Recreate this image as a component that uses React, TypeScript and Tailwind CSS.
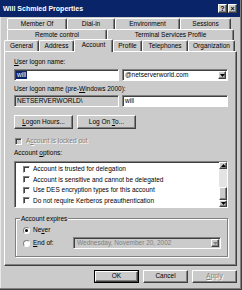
import React from 'react';

const sunken =
  'border border-t-[#808080] border-l-[#808080] border-b-white border-r-white shadow-[inset_1px_1px_0_#404040]';
const raised =
  'border border-t-white border-l-white border-b-[#404040] border-r-[#404040] shadow-[inset_-1px_-1px_0_#808080]';
const dimText = 'text-[#808080] [text-shadow:1px_1px_0_#ffffff]';

const Arrow = ({ up = false, dim = false }: { up?: boolean; dim?: boolean }) => (
  <svg width="5" height="3" viewBox="0 0 5 3">
    <path d={up ? 'M0 3h5L2.5 0z' : 'M0 0h5L2.5 3z'} fill={dim ? '#808080' : '#000'} />
  </svg>
);

const DropButton = ({ dim = false }: { dim?: boolean }) => (
  <div className={`w-[8px] h-[8px] shrink-0 bg-[#cbcbcb] flex items-center justify-center ${raised}`}>
    <Arrow dim={dim} />
  </div>
);

const Tab = ({ label, w }: { label: string; w: string }) => (
  <div
    className={`${w} h-[11px] flex items-center justify-center rounded-t-[2px] border-t border-l border-r border-t-white border-l-white border-r-[#404040] shadow-[inset_-1px_0_0_#808080]`}
  >
    {label}
  </div>
);

const CheckBox = ({ dim = false }: { dim?: boolean }) => (
  <span className={`w-[7px] h-[7px] shrink-0 ${sunken} ${dim ? 'bg-[#cbcbcb]' : 'bg-white'}`} />
);

const Radio = ({ on = false }: { on?: boolean }) => (
  <span className="w-[7px] h-[7px] shrink-0 rounded-full border border-t-[#808080] border-l-[#808080] border-b-white border-r-white bg-white flex items-center justify-center">
    {on && <span className="w-[3px] h-[3px] rounded-full bg-black" />}
  </span>
);

const options = [
  'Account is trusted for delegation',
  'Account is sensitive and cannot be delegated',
  'Use DES encryption types for this account',
  'Do not require Kerberos preauthentication',
];

export default function App() {
  return (
    <div className="w-[242px] h-[290px] overflow-hidden bg-[#cbcbcb] text-black font-['Liberation_Sans',Arial,sans-serif] text-[6.5px] leading-none shadow-[inset_-1px_-1px_0_#404040,inset_-2px_-2px_0_#808080,inset_1px_0_0_#e8e8e8]">
      {/* Title bar */}
      <div className="h-[17px] mr-[2px] bg-[#0a246a] flex items-center pl-[3px] pr-[3px]">
        <span className="text-white font-bold text-[7px]">Will Schmied Properties</span>
        <div className="ml-auto flex gap-[1px]">
          <div className={`w-[9px] h-[9px] bg-[#cbcbcb] flex items-center justify-center font-bold text-[7px] ${raised}`}>?</div>
          <div className={`w-[9px] h-[9px] bg-[#cbcbcb] flex items-center justify-center font-bold text-[7px] ${raised}`}>×</div>
        </div>
      </div>

      {/* Tabs */}
      <div className="mt-[1px]">
        <div className="flex pl-[7px]">
          <Tab label="Member Of" w="w-[60px]" />
          <Tab label="Dial-in" w="w-[48px]" />
          <Tab label="Environment" w="w-[65px]" />
          <Tab label="Sessions" w="w-[51px]" />
        </div>
        <div className="flex pl-[7px]">
          <Tab label="Remote control" w="w-[100px]" />
          <Tab label="Terminal Services Profile" w="w-[127px]" />
        </div>
        <div className="flex items-end pl-[4px] h-[11px] relative z-10">
          <Tab label="General" w="w-[35px]" />
          <Tab label="Address" w="w-[35px]" />
          <div className="w-[39px] h-[13px] -mb-[1px] pb-[2px] bg-[#cbcbcb] flex items-center justify-center rounded-t-[2px] border-t border-l border-r border-t-white border-l-white border-r-[#404040] shadow-[inset_-1px_0_0_#808080]">
            Account
          </div>
          <Tab label="Profile" w="w-[29px]" />
          <Tab label="Telephones" w="w-[46px]" />
          <Tab label="Organization" w="w-[47px]" />
        </div>
      </div>

      {/* Panel */}
      <div className="ml-[4px] w-[233px] h-[215px] pl-[9px] border border-t-white border-l-white border-b-[#404040] border-r-[#404040] shadow-[inset_-1px_-1px_0_#808080]">
        <div className="mt-[6px] h-[8px] flex items-center">
          <span><u>U</u>ser logon name:</span>
        </div>
        <div className="mt-[3px] flex gap-[3px]">
          <div className={`w-[105px] h-[12px] bg-white flex items-center pl-[1px] ${sunken}`}>
            <span className="bg-[#0a246a] text-white px-[1px] h-[8px] flex items-center">will</span>
          </div>
          <div className={`w-[106px] h-[12px] bg-white flex items-center pl-[2px] pr-[1px] ${sunken}`}>
            <span>@netserverworld.com</span>
            <div className="ml-auto">
              <DropButton />
            </div>
          </div>
        </div>

        <div className="mt-[4px] h-[8px] flex items-center">
          <span>User logon name (pre-<u>W</u>indows 2000):</span>
        </div>
        <div className="mt-[2px] flex gap-[3px]">
          <div className={`w-[105px] h-[12px] bg-[#cbcbcb] flex items-center pl-[2px] ${sunken}`}>NETSERVERWORLD\</div>
          <div className={`w-[106px] h-[12px] bg-white flex items-center pl-[2px] ${sunken}`}>will</div>
        </div>

        <div className="mt-[8px] flex gap-[4px]">
          <div className={`w-[59px] h-[14px] flex items-center justify-center ${raised}`}>
            <span><u>L</u>ogon Hours...</span>
          </div>
          <div className={`w-[59px] h-[14px] flex items-center justify-center ${raised}`}>
            <span>Log On <u>T</u>o...</span>
          </div>
        </div>

        <div className="mt-[8px] h-[8px] flex items-center gap-[4px] pl-[1px]">
          <CheckBox dim />
          <span className={dimText}>A<u>c</u>count is locked out</span>
        </div>

        <div className="mt-[4px] h-[8px] flex items-center">
          <span>Account <u>o</u>ptions:</span>
        </div>

        <div className={`mt-[4px] w-[214px] h-[47px] bg-white flex ${sunken}`}>
          <div className="flex-1 pl-[8px] pt-[2px]">
            {options.map((o) => (
              <div key={o} className="h-[10.5px] flex items-center gap-[3px]">
                <CheckBox />
                <span>{o}</span>
              </div>
            ))}
          </div>
          <div className="w-[8px] flex flex-col">
            <div className={`h-[7px] bg-[#cbcbcb] flex items-center justify-center ${raised}`}>
              <Arrow up />
            </div>
            <div className="h-[18px] bg-[#e4e4e4]" />
            <div className={`h-[13px] bg-[#cbcbcb] ${raised}`} />
            <div className={`h-[7px] bg-[#cbcbcb] flex items-center justify-center ${raised}`}>
              <Arrow />
            </div>
          </div>
        </div>

        {/* Account expires */}
        <div className="relative mt-[10px] ml-[1px] w-[213px] h-[39px] pl-[7px] border border-[#808080] shadow-[inset_1px_1px_0_#ffffff,1px_1px_0_#ffffff]">
          <span className="absolute -top-[4px] left-[4px] px-[1px] bg-[#cbcbcb] h-[8px] flex items-center">Account expires</span>
          <div className="mt-[7px] h-[8px] flex items-center gap-[3px]">
            <Radio on />
            <span>Ne<u>v</u>er</span>
          </div>
          <div className="mt-[3px] h-[12px] flex items-center">
            <Radio />
            <span className="ml-[3px] w-[40px]">
              <u>E</u>nd of:
            </span>
            <div className={`w-[148px] h-[12px] bg-[#cbcbcb] flex items-center pl-[3px] pr-[1px] ${sunken}`}>
              <span className="text-[#808080]">Wednesday, November 20, 2002</span>
              <div className="ml-auto">
                <DropButton dim />
              </div>
            </div>
          </div>
        </div>
      </div>

      {/* Dialog buttons */}
      <div className="mt-[4px] flex justify-end gap-[4px] pr-[5px]">
        <div className="w-[45px] h-[13px] border border-black">
          <div className={`w-full h-full flex items-center justify-center ${raised}`}>OK</div>
        </div>
        <div className={`w-[45px] h-[13px] flex items-center justify-center ${raised}`}>Cancel</div>
        <div className={`w-[45px] h-[13px] flex items-center justify-center ${raised}`}>
          <span className={dimText}>
            <u>A</u>pply
          </span>
        </div>
      </div>
    </div>
  );
}
